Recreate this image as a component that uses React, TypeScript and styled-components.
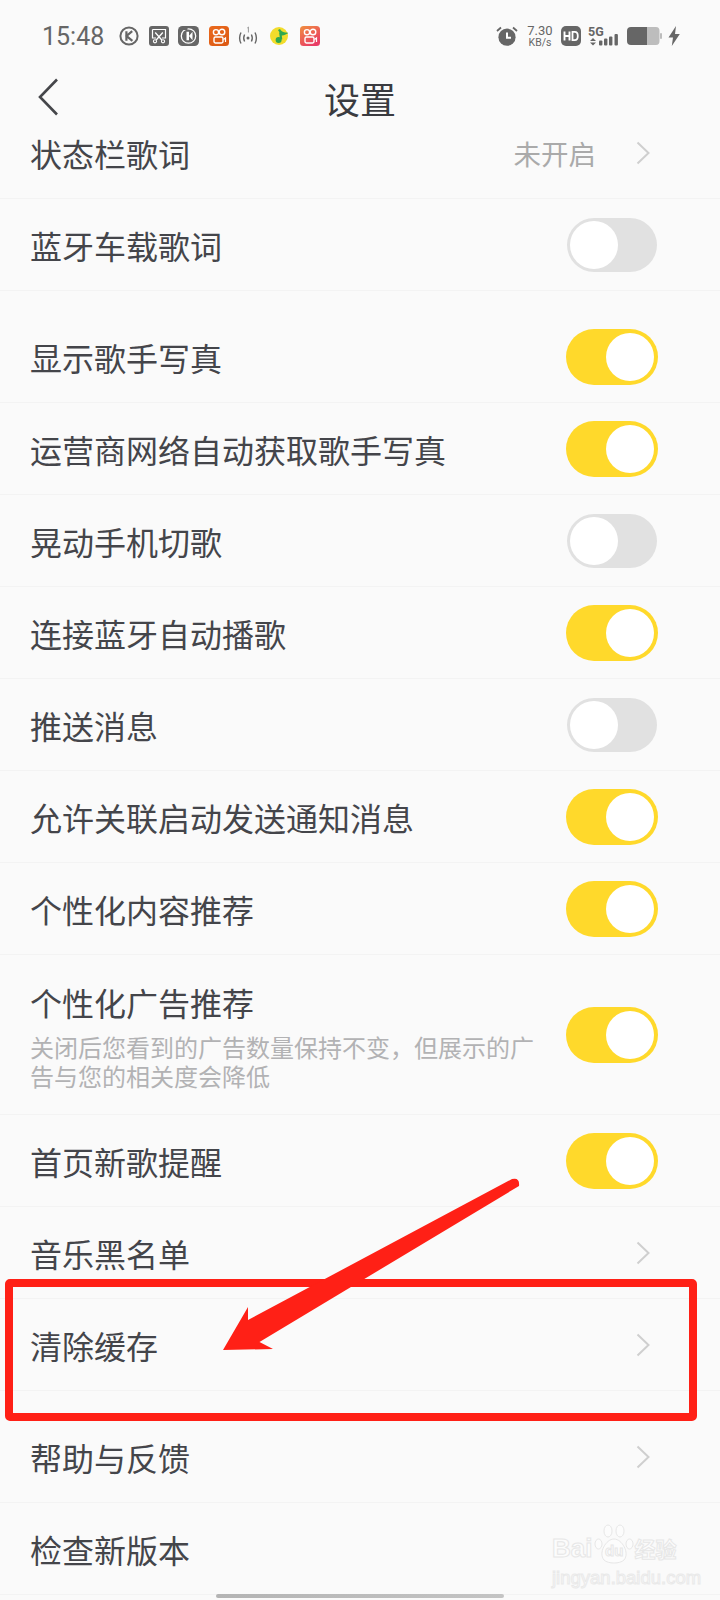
import React from "react"
import styled, { createGlobalStyle } from "styled-components"

const GlobalStyle = createGlobalStyle`
    html, body {
        margin: 0;
        padding: 0;
        background: #fafafa;
    }
`

const CJK = `"Noto Sans CJK SC", "Noto Sans", sans-serif`

const Page = styled.div`
    position: relative;
    width: 720px;
    height: 1600px;
    overflow: hidden;
    background: #fafafa;
    font-family: ${CJK};
`

const StatusBar = styled.div`
    display: flex;
    align-items: center;
    justify-content: space-between;
    height: 72px;
    padding: 0 40px 0 42px;
    box-sizing: border-box;
`
const StatusGroup = styled.div`
    display: flex;
    align-items: center;
`
const Clock = styled.span`
    width: 77px;
    font-family: Roboto, sans-serif;
    font-size: 25px;
    color: #666;
`
const StatusIcon = styled.svg<{ $gap?: number }>`
    display: block;
    flex: none;
    margin-right: ${props => props.$gap ?? 9}px;
`
const Speed = styled.div`
    display: flex;
    flex-direction: column;
    align-items: center;
    width: 26px;
    margin: 0 8px 0 9px;
    font-family: Roboto, sans-serif;
    color: #666;
`
const SpeedValue = styled.span`
    font-size: 13px;
    line-height: 12px;
`
const SpeedUnit = styled.span`
    font-size: 10.5px;
    line-height: 11px;
`
const SignalWrap = styled.div`
    position: relative;
    flex: none;
    width: 31px;
    height: 20px;
    margin-right: 8px;
`
const SignalLabel = styled.span`
    position: absolute;
    left: 0;
    top: 0;
    font-family: Roboto, sans-serif;
    font-size: 12.5px;
    line-height: 12px;
    font-weight: 700;
    color: #666;
`

const NavBar = styled.div`
    position: relative;
    display: flex;
    align-items: center;
    justify-content: center;
    height: 52px;
    margin-bottom: 4px;
`
const BackIcon = styled.svg`
    position: absolute;
    left: 37px;
    top: 6px;
`
const Title = styled.h1`
    margin: 0;
    font-size: 36px;
    line-height: 52px;
    font-weight: 400;
    color: #3a3b40;
`

const List = styled.div`
    overflow: hidden;
    height: 1467px;
`
const Section = styled.div<{ $first?: boolean }>`
    margin-top: ${props => (props.$first ? -21 : 20)}px;
`
const Row = styled.div<{ $tall?: boolean }>`
    display: flex;
    align-items: center;
    justify-content: space-between;
    height: ${props => (props.$tall ? 160 : 92)}px;
    padding: 0 62px 0 30px;
    box-sizing: border-box;
    border-bottom: 1px solid #f3f3f3;
`
const RowText = styled.div`
    display: flex;
    flex-direction: column;
`
const RowLabel = styled.span`
    font-size: 32px;
    line-height: 44px;
    color: #44454a;
`
const RowHint = styled.span`
    width: 510px;
    margin-top: 8px;
    font-size: 24px;
    line-height: 29px;
    color: #b2b2b4;
`
const RowRight = styled.div`
    display: flex;
    align-items: center;
    margin-right: 8px;
`
const RowValue = styled.span`
    margin-right: 40px;
    font-size: 27.5px;
    color: #aaaaaa;
`
const Chevron = styled.svg`
    display: block;
`

const Track = styled.div<{ $on: boolean }>`
    display: flex;
    flex: none;
    justify-content: ${props => (props.$on ? "flex-end" : "flex-start")};
    align-items: center;
    width: ${props => (props.$on ? 92 : 90)}px;
    height: ${props => (props.$on ? 56 : 54)}px;
    margin-left: ${props => (props.$on ? -2 : 0)}px;
    margin-right: ${props => (props.$on ? 0 : 1)}px;
    padding: 0 4px 0 3px;
    box-sizing: border-box;
    border-radius: 28px;
    background: ${props => (props.$on ? "#ffd92b" : "#e1e1e1")};
`
const Knob = styled.div`
    width: 48px;
    height: 48px;
    border-radius: 50%;
    background: #fff;
`

const HomeBar = styled.div`
    width: 288px;
    height: 4px;
    margin: -1px auto 0;
    border-radius: 2px;
    background: linear-gradient(90deg, #b4b4b4 0, #c4c4c4 100%);
`

// red marks someone drew over the screenshot
const MarkBox = styled.div`
    position: absolute;
    left: 5px;
    top: 1279px;
    width: 692px;
    height: 142px;
    box-sizing: border-box;
    border: 8px solid #ff2016;
    border-radius: 5px;
`
const MarkArrow = styled.svg`
    position: absolute;
    left: 0;
    top: 1170px;
`

const Watermark = styled.div`
    position: absolute;
    left: 552px;
    top: 1522px;
    width: 132px;
    opacity: 0.8;
`
const WatermarkTop = styled.div`
    display: flex;
    align-items: flex-end;
    height: 41px;
`
const WatermarkWord = styled.span<{ $cjk?: boolean }>`
    font-family: ${props => (props.$cjk ? CJK : `"Liberation Sans", sans-serif`)};
    font-size: ${props => (props.$cjk ? 21 : 26)}px;
    line-height: 30px;
    font-weight: 700;
    color: #fdfdfd;
    -webkit-text-stroke: 1px #e3e3e3;
`
const WatermarkPaw = styled.svg`
    display: block;
    margin: 0 0 -1px 2px;
`
const WatermarkUrl = styled.div`
    margin-top: 4px;
    font-family: "Liberation Sans", sans-serif;
    font-size: 18.5px;
    line-height: 22px;
    white-space: nowrap;
    color: #fbfbfb;
    -webkit-text-stroke: 1px #e6e6e6;
`

const Arrow = () => (
    <Chevron width="14" height="24" viewBox="0 0 14 24" fill="none">
        <path d="M1.5 1.5 L12.5 12 L1.5 22.5" stroke="#cfcfcf" strokeWidth="2" />
    </Chevron>
)

const Toggle = ({ on }: { on: boolean }) => (
    <Track $on={on}>
        <Knob />
    </Track>
)

const KCircle = () => (
    <StatusIcon $gap={10} width="20" height="20" viewBox="0 0 20 20" fill="none">
        <circle cx="10" cy="10" r="8.6" stroke="#666" strokeWidth="2" />
        <path d="M7.4 5.2 V14.8 M13.2 5.2 L7.6 10 L13.4 14.8" stroke="#666" strokeWidth="2.2" />
    </StatusIcon>
)
const ScissorTile = () => (
    <StatusIcon width="20" height="20" viewBox="0 0 20 20" fill="none">
        <rect width="20" height="20" rx="3" fill="#666" />
        <path d="M3.5 3.5 H16.5 V12 H13 M7 12 H3.5 V3.5" stroke="#fff" strokeWidth="1.2" />
        <path d="M6.2 6.5 L12.8 14 M13.8 6.5 L7.2 14" stroke="#fff" strokeWidth="1.3" />
        <circle cx="6" cy="15.3" r="1.6" stroke="#fff" strokeWidth="1.1" />
        <circle cx="14" cy="15.3" r="1.6" stroke="#fff" strokeWidth="1.1" />
    </StatusIcon>
)
const KTile = () => (
    <StatusIcon $gap={10} width="21" height="20" viewBox="0 0 21 20" fill="none">
        <rect width="21" height="20" rx="4.5" fill="#666" />
        <circle cx="10.5" cy="10" r="7.2" stroke="#fff" strokeWidth="1.3" />
        <rect x="4.5" y="1" width="5" height="3" fill="#666" />
        <path d="M8.5 5.8 H11 V14.2 H8.5 Z M11 10 L14.5 5.8 V14.2 Z" fill="#fff" />
    </StatusIcon>
)
const KuaishouTile = ({ pink }: { pink?: boolean }) => {
    const id = pink ? "tilePink" : "tileOrange"
    return (
        <StatusIcon $gap={pink ? 0 : 9} width="20" height="20" viewBox="0 0 20 20" fill="none">
            <defs>
                <linearGradient id={id} x1="0" y1="0" x2="0.6" y2="1">
                    <stop offset="0" stopColor={pink ? "#f0903e" : "#ea6a1d"} />
                    <stop offset="1" stopColor={pink ? "#e93c66" : "#dd5a14"} />
                </linearGradient>
            </defs>
            <rect width="20" height="20" rx="3.5" fill={`url(#${id})`} />
            <circle cx="7" cy="6.2" r="2.6" stroke="#fff" strokeWidth="1.4" />
            <circle cx="13" cy="6" r="2.8" stroke="#fff" strokeWidth="1.4" />
            <rect x="5" y="11" width="9" height="6" rx="1.4" stroke="#fff" strokeWidth="1.4" />
            <path d="M14.5 13.5 L16.5 12 V16" stroke="#fff" strokeWidth="1.2" />
        </StatusIcon>
    )
}
const Hotspot = () => (
    <StatusIcon $gap={12} width="20" height="20" viewBox="0 0 20 20" fill="none">
        <circle cx="10" cy="12" r="1.5" fill="#666" />
        <path d="M6.6 8.5 Q4.8 12 6.6 15.5 M13.4 8.5 Q15.2 12 13.4 15.5" stroke="#666" strokeWidth="1.4" />
        <path d="M3 6.5 Q0.2 12 3 17.5 M17 6.5 Q19.8 12 17 17.5" stroke="#666" strokeWidth="1.4" />
        <path d="M9.3 2 L10.4 1 V6.5" stroke="#999" strokeWidth="1" />
    </StatusIcon>
)
const QQMusic = () => (
    <StatusIcon $gap={12} width="18" height="18" viewBox="0 0 18 18" fill="none">
        <circle cx="9" cy="9" r="9" fill="#f2dc2c" />
        <path d="M9 2.5 Q10.5 6 15 6.5 Q12.5 7.8 10.4 7 L11.2 12.5" stroke="#2fa84f" strokeWidth="2.2" />
        <circle cx="8.6" cy="13" r="3" fill="#2fa84f" />
    </StatusIcon>
)
const Alarm = () => (
    <StatusIcon $gap={0} width="22" height="20" viewBox="0 0 22 20" fill="none">
        <circle cx="11" cy="11.2" r="8.6" fill="#666" />
        <path d="M11 6.5 V11.8 H15" stroke="#fff" strokeWidth="2" />
        <path d="M1 5 L5 1.5 M21 5 L17 1.5" stroke="#666" strokeWidth="1.8" />
    </StatusIcon>
)
const HdBadge = () => (
    <StatusIcon $gap={7} width="20" height="20" viewBox="0 0 20 20" fill="none">
        <rect width="20" height="20" rx="5" fill="#666" />
        <path d="M3.5 5.5 V14.5 M8.5 5.5 V14.5 M3.5 10 H8.5" stroke="#fff" strokeWidth="1.9" />
        <path d="M11.5 5.8 H13.8 Q16.8 5.8 16.8 10 Q16.8 14.2 13.8 14.2 H11.5 Z" stroke="#fff" strokeWidth="1.8" />
    </StatusIcon>
)
const Signal = () => (
    <SignalWrap>
        <StatusIcon $gap={0} width="31" height="20" viewBox="0 0 31 20" fill="none">
            <path d="M2 15 L5 12 L8 15 Z M2 16.5 L5 19.5 L8 16.5 Z" fill="#666" />
            <rect x="11" y="14.5" width="3.4" height="5" rx="1" fill="#666" />
            <rect x="16" y="12.5" width="3.4" height="7" rx="1" fill="#666" />
            <rect x="21" y="10.5" width="3.4" height="9" rx="1" fill="#666" />
            <rect x="26.5" y="8" width="3.4" height="11.5" rx="1" fill="#666" />
        </StatusIcon>
        <SignalLabel>5G</SignalLabel>
    </SignalWrap>
)
const Battery = () => (
    <StatusIcon $gap={6} width="35" height="18" viewBox="0 0 35 18" fill="none">
        <path d="M20 0 H29 Q32.5 0 32.5 4 V14 Q32.5 18 29 18 H20 Z" fill="#bdbdbd" />
        <path d="M20 0 H4 Q0 0 0 4 V14 Q0 18 4 18 H20 Z" fill="#666" />
        <rect x="33" y="6" width="2" height="6" rx="1" fill="#bdbdbd" />
    </StatusIcon>
)
const Bolt = () => (
    <StatusIcon $gap={0} width="12" height="20" viewBox="0 0 12 20" fill="none">
        <path d="M8 0 L0.5 11.5 H5 L3.8 20 L11.8 8 H7 Z" fill="#666" />
    </StatusIcon>
)

const firstSection = [
    { label: "状态栏歌词", value: "未开启" },
    { label: "蓝牙车载歌词", on: false },
]
const secondSection = [
    { label: "显示歌手写真", on: true },
    { label: "运营商网络自动获取歌手写真", on: true },
    { label: "晃动手机切歌", on: false },
    { label: "连接蓝牙自动播歌", on: true },
    { label: "推送消息", on: false },
    { label: "允许关联启动发送通知消息", on: true },
    { label: "个性化内容推荐", on: true },
    { label: "个性化广告推荐", on: true, hint: "关闭后您看到的广告数量保持不变，但展示的广告与您的相关度会降低" },
    { label: "首页新歌提醒", on: true },
    { label: "音乐黑名单" },
    { label: "清除缓存" },
]
const thirdSection = [{ label: "帮助与反馈" }, { label: "检查新版本", plain: true }]

interface RowData {
    label: string
    value?: string
    on?: boolean
    hint?: string
    plain?: boolean
}

const SettingRow = ({ label, value, on, hint, plain }: RowData) => (
    <Row $tall={!!hint}>
        <RowText>
            <RowLabel>{label}</RowLabel>
            {hint && <RowHint>{hint}</RowHint>}
        </RowText>
        {on !== undefined ? (
            <Toggle on={on} />
        ) : plain ? null : (
            <RowRight>
                {value && <RowValue>{value}</RowValue>}
                <Arrow />
            </RowRight>
        )}
    </Row>
)

export default function App() {
    return (
        <Page>
            <GlobalStyle />
            <StatusBar>
                <StatusGroup>
                    <Clock>15:48</Clock>
                    <KCircle />
                    <ScissorTile />
                    <KTile />
                    <KuaishouTile />
                    <Hotspot />
                    <QQMusic />
                    <KuaishouTile pink />
                </StatusGroup>
                <StatusGroup>
                    <Alarm />
                    <Speed>
                        <SpeedValue>7.30</SpeedValue>
                        <SpeedUnit>KB/s</SpeedUnit>
                    </Speed>
                    <HdBadge />
                    <Signal />
                    <Battery />
                    <Bolt />
                </StatusGroup>
            </StatusBar>
            <NavBar>
                <BackIcon width="22" height="38" viewBox="0 0 22 38" fill="none">
                    <path d="M20 1.5 L3 19 L20 36.5" stroke="#45464a" strokeWidth="2.6" />
                </BackIcon>
                <Title>设置</Title>
            </NavBar>
            <List>
                <Section $first>
                    {firstSection.map(row => <SettingRow key={row.label} {...row} />)}
                </Section>
                <Section>
                    {secondSection.map(row => <SettingRow key={row.label} {...row} />)}
                </Section>
                <Section>
                    {thirdSection.map(row => <SettingRow key={row.label} {...row} />)}
                </Section>
            </List>
            <HomeBar />
            <Watermark>
                <WatermarkTop>
                    <WatermarkWord>Bai</WatermarkWord>
                    <WatermarkPaw width="40" height="41" viewBox="0 0 40 41" fill="#fdfdfd" stroke="#e3e3e3">
                        <ellipse cx="4.5" cy="21" rx="3.5" ry="5" />
                        <ellipse cx="14" cy="8" rx="4" ry="6" />
                        <ellipse cx="26" cy="8" rx="4" ry="6" />
                        <ellipse cx="35.5" cy="21" rx="3.5" ry="5" />
                        <path d="M20 16 C28 16 36 30 30 37 C26 41 14 41 10 37 C4 30 12 16 20 16 Z" />
                        <text x="11" y="33" fontFamily="Liberation Sans, sans-serif" fontSize="15" fontWeight="700">du</text>
                    </WatermarkPaw>
                    <WatermarkWord $cjk>经验</WatermarkWord>
                </WatermarkTop>
                <WatermarkUrl>jingyan.baidu.com</WatermarkUrl>
            </Watermark>
            <MarkBox />
            <MarkArrow width="530" height="190" viewBox="0 1170 530 190" fill="#ff2016">
                <path d="M512 1179 Q520 1177 519 1186 L259.5 1342 L273 1349 L223 1350 L248 1307 L248 1320 Z" />
            </MarkArrow>
        </Page>
    )
}
